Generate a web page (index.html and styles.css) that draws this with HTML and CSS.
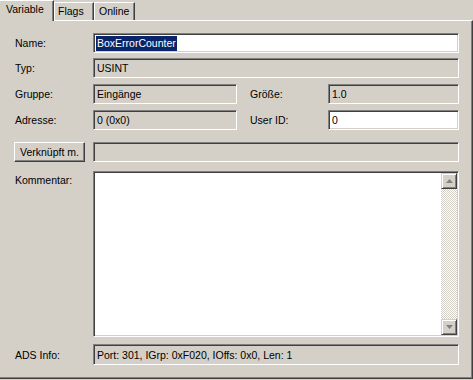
FILE: index.html
```html
<!DOCTYPE html>
<html lang="de">

<head>
    <meta charset="UTF-8">
    <title>Variable</title>
    <link rel="stylesheet" href="styles.css">
</head>

<body>
    <div class="tabs">
        <div class="tab active">Variable</div>
        <div class="tab tab-flags">Flags</div>
        <div class="tab tab-online">Online</div>
    </div>
    <div class="panel">
        <div class="row">
            <label>Name:</label>
            <div class="edit wide white"><span class="sel">BoxErrorCounter</span></div>
        </div>
        <div class="row gap-5">
            <label>Typ:</label>
            <div class="edit wide">USINT</div>
        </div>
        <div class="row gap-6">
            <label>Gruppe:</label>
            <div class="edit">Eingänge</div>
            <label class="second">Größe:</label>
            <div class="edit">1.0</div>
        </div>
        <div class="row gap-6">
            <label>Adresse:</label>
            <div class="edit">0 (0x0)</div>
            <label class="second">User ID:</label>
            <div class="edit white">0</div>
        </div>
        <div class="row gap-12">
            <button class="btn">Verknüpft m.</button>
            <div class="edit wide"></div>
        </div>
        <div class="row memo-row gap-9">
            <label class="top">Kommentar:</label>
            <div class="memo wide">
                <div class="memo-text"></div>
                <div class="scrollbar">
                    <div class="sb-btn">
                        <svg width="7" height="4" viewBox="0 0 7 4"><polygon points="3.5,0 7,4 0,4" fill="#808080"/></svg>
                    </div>
                    <div class="sb-track"></div>
                    <div class="sb-btn">
                        <svg width="7" height="4" viewBox="0 0 7 4"><polygon points="0,0 7,0 3.5,4" fill="#808080"/></svg>
                    </div>
                </div>
            </div>
        </div>
        <div class="row ads-row gap-7">
            <label>ADS Info:</label>
            <div class="edit wide">Port: 301, IGrp: 0xF020, IOffs: 0x0, Len: 1</div>
        </div>
    </div>
</body>

</html>
```

FILE: styles.css
```css
body {
    font-family: 'Liberation Sans', Arial, sans-serif;
    font-size: 10.5px;
    line-height: 12px;
    margin: 0;
    padding: 0;
    background-color: #d4d0c8;
    color: #000;
    width: 473px;
    height: 380px;
    overflow: hidden;
}

/* tab strip */

.tabs {
    display: flex;
    align-items: flex-end;
    height: 20px;
    position: relative;
    z-index: 1;
}

.tab {
    box-sizing: border-box;
    height: 18px;
    border-top: 1px solid #fff;
    border-left: 1px solid #fff;
    border-right: 1px solid #404040;
    box-shadow: inset -1px 0 #808080;
    padding: 2px 0 0 3px;
}

.tab.active {
    height: 21px;
    width: 54px;
    margin-bottom: -1px;
    border-left: none;
    padding-left: 6px;
    background-color: #d4d0c8;
}

.tab-flags {
    width: 40px;
}

.tab-online {
    width: 41px;
    padding-left: 4px;
}

/* page */

.panel {
    box-sizing: border-box;
    width: 473px;
    height: 359px;
    border-top: 1px solid #fff;
    border-right: 1px solid #404040;
    border-bottom: 1px solid #404040;
    box-shadow: inset -1px -1px #808080;
    padding: 12px 0 0 15px;
    display: flex;
    flex-direction: column;
}

.row {
    display: grid;
    grid-template-columns: 78px 144px 13px 78px 131px;
    align-items: center;
    height: 20px;
}

.gap-5 { margin-top: 5px; }
.gap-6 { margin-top: 6px; }
.gap-7 { margin-top: 7px; }
.gap-9 { margin-top: 9px; }
.gap-12 { margin-top: 12px; }

label {
    white-space: nowrap;
}

label.second {
    grid-column: 4;
}

label.top {
    align-self: start;
    padding-top: 3px;
}

.wide {
    grid-column: 2 / 6;
}

/* sunken edit box */

.edit,
.memo {
    box-sizing: border-box;
    height: 100%;
    border: 1px solid;
    border-color: #808080 #fff #fff #808080;
    box-shadow: inset 1px 1px #404040, inset -1px -1px #d4d0c8;
    background-color: #d4d0c8;
}

.edit {
    display: flex;
    align-items: center;
    padding: 0 2px 0 3px;
    white-space: nowrap;
}

.edit.white {
    background-color: #fff;
}

.sel {
    background-color: #0a246a;
    color: #fff;
    margin-left: -1px;
    padding: 1px 1px 2px 1px;
}

.btn {
    box-sizing: border-box;
    width: 71px;
    height: 20px;
    margin-left: -1px;
    padding: 0;
    font: inherit;
    color: #000;
    background-color: #d4d0c8;
    border: 1px solid;
    border-color: #fff #404040 #404040 #fff;
    box-shadow: inset -1px -1px #808080;
}

/* comment field */

.memo-row {
    height: 166px;
}

.memo {
    display: flex;
    padding: 1px;
    background-color: #fff;
}

.memo-text {
    flex: 1;
}

.scrollbar {
    width: 16px;
    display: flex;
    flex-direction: column;
}

.sb-btn {
    box-sizing: border-box;
    width: 16px;
    height: 16px;
    border: 1px solid;
    border-color: #d4d0c8 #404040 #404040 #d4d0c8;
    box-shadow: inset 1px 1px #fff, inset -1px -1px #808080;
    background-color: #d4d0c8;
    display: flex;
    align-items: center;
    justify-content: center;
}

.sb-btn svg {
    display: block;
}

.sb-track {
    flex: 1;
    background: repeating-conic-gradient(#fff 0 25%, #d4d0c8 0 50%) 0 0 / 2px 2px;
}

.ads-row {
    height: 21px;
}
```
